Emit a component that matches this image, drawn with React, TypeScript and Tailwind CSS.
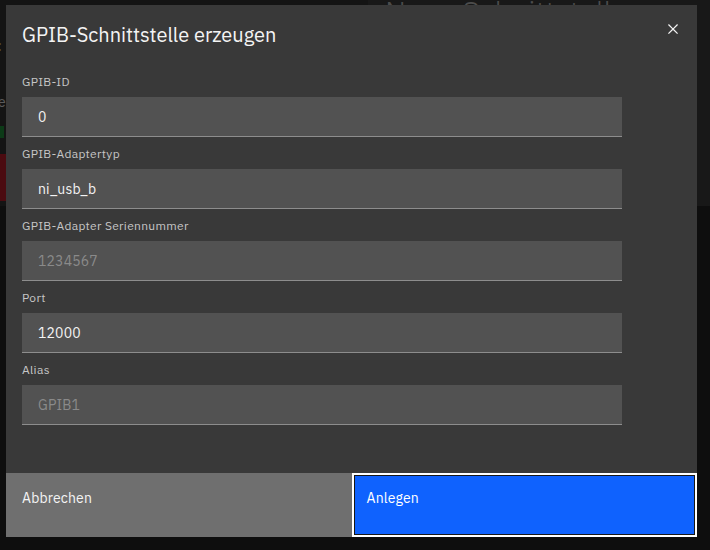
import React from "react";

interface Field {
  label: string;
  value?: string;
  placeholder?: string;
}

const fields: Field[] = [
  { label: "GPIB-ID", value: "0" },
  { label: "GPIB-Adaptertyp", value: "ni_usb_b" },
  { label: "GPIB-Adapter Seriennummer", placeholder: "1234567" },
  { label: "Port", value: "12000" },
  { label: "Alias", placeholder: "GPIB1" },
];

function CloseIcon() {
  return (
    <svg width="20" height="20" viewBox="0 0 32 32" fill="currentColor">
      <path d="M24 9.4L22.6 8 16 14.6 9.4 8 8 9.4 14.6 16 8 22.6 9.4 24 16 17.4 22.6 24 24 22.6 17.4 16 24 9.4z" />
    </svg>
  );
}

export default function App() {
  return (
    <div
      className="relative w-[710px] h-[550px] overflow-hidden bg-[#0e0e0e]"
      style={{ fontFamily: "'IBM Plex Sans', Roboto, 'Noto Sans', sans-serif" }}
    >
      {/* page behind the overlay */}
      <div className="flex">
        <div className="w-[368px] h-[206px] bg-[#141414] flex flex-col pt-[36px] text-[#5a5a5a] text-sm">
          <span className="-ml-[6px] text-[#5c5a3a]">l:</span>
          <span className="mt-[36px] -ml-[2px]">e</span>
          <div className="mt-[14px] w-[4px] h-[12px] bg-[#0c3a17]" />
          <div className="mt-[16px] w-full h-[47px] bg-[#4b0b10]" />
        </div>
        <div className="flex-1 h-[206px] bg-[#181818] pl-[17px]">
          <div className="-mt-[3px] text-[30px] font-light text-[#4c4c4c] leading-none">Neue Schnittstelle</div>
        </div>
      </div>

      {/* modal */}
      <div className="absolute left-[6px] top-[5px] w-[691px] h-[532px] bg-[#393939] flex flex-col text-[#f4f4f4]">
        <button className="absolute right-0 top-0 w-12 h-12 flex items-center justify-center text-[#f4f4f4]">
          <CloseIcon />
        </button>
        <div className="pt-[16px] px-4 pr-12">
          <h2 className="text-[20px] leading-[28px] font-normal">GPIB-Schnittstelle erzeugen</h2>
        </div>
        <div className="px-4 mt-[24px] flex flex-col gap-2">
          {fields.map((f) => (
            <div key={f.label} className="flex flex-col">
              <label className="pt-[1px] text-[12px] leading-4 tracking-[0.32px] text-[#c6c6c6] mb-[7px]">{f.label}</label>
              <input
                type="text"
                defaultValue={f.value}
                placeholder={f.placeholder}
                className="w-[600px] h-10 px-4 bg-[#525252] border-b border-[#8d8d8d] text-[14px] tracking-[0.16px] text-[#f4f4f4] placeholder:text-[#8a8a8a] outline-none"
              />
            </div>
          ))}
        </div>
        <div className="mt-auto grid grid-cols-2 h-16">
          <button className="bg-[#6f6f6f] text-left px-[16px] pt-[16px] flex items-start text-[14px] leading-[18px] tracking-[0.16px] text-[#f4f4f4]">
            Abbrechen
          </button>
          <button className="bg-[#0f62fe] border-2 border-white shadow-[inset_0_0_0_1px_#161616] px-[13px] pt-[14px] flex items-start text-[14px] leading-[18px] tracking-[0.16px] text-white">
            Anlegen
          </button>
        </div>
      </div>
    </div>
  );
}
